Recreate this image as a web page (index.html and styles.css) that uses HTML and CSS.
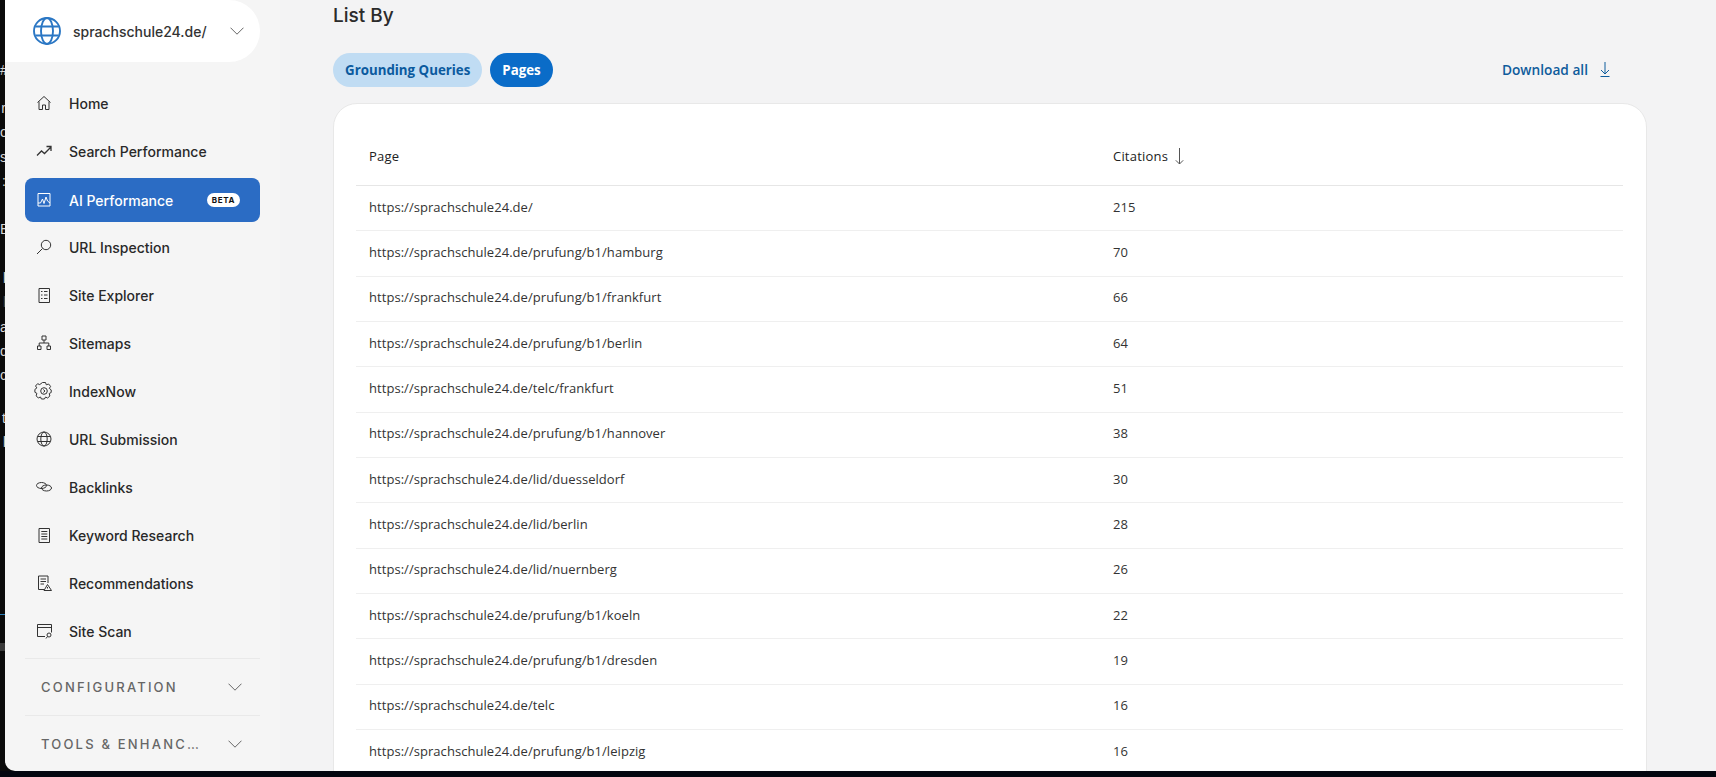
FILE: index.html
```html
<!DOCTYPE html>
<html lang="en">
<head>
<meta charset="utf-8">
<title>AI Performance</title>
<link rel="stylesheet" href="styles.css">
</head>
<body>
<div class="screen">
  <div class="strip" aria-hidden="true">
    <div class="strip-line strip-first">#</div>
    <div class="strip-line">r</div>
    <div class="strip-line">o</div>
    <div class="strip-line">s</div>
    <div class="strip-line">:</div>
    <div class="strip-line"></div>
    <div class="strip-line">B</div>
    <div class="strip-line"></div>
    <div class="strip-line">l</div>
    <div class="strip-line dim">l</div>
    <div class="strip-line">a</div>
    <div class="strip-line">d</div>
    <div class="strip-line">c</div>
    <div class="strip-line"></div>
    <div class="strip-line strip-t">t</div>
    <div class="strip-line">l</div>
    <div class="strip-blue"></div>
    <div class="strip-box"></div>
  </div>

  <aside class="sidebar">
    <div class="site">
      <svg class="globe" viewBox="0 0 28 28" fill="none" stroke="currentColor" stroke-width="1.9">
        <circle cx="14" cy="14" r="13"/>
        <ellipse cx="14" cy="14" rx="6" ry="13"/>
        <path d="M2.5 9.5h23M2.5 18.5h23"/>
      </svg>
      <span class="site-name">sprachschule24.de/</span>
      <svg class="chev site-chev" viewBox="0 0 14 8" fill="none" stroke="currentColor"><path d="M.5.7 7 7.200 13.500.7"/></svg>
    </div>

    <nav class="nav">
      <a class="item">
        <svg class="ico" viewBox="0 0 20 20" fill="none" stroke="currentColor"><path d="M3.500 9.500 10 3.500l6.500 6M5 8.500v8h3.500v-4.500h3v4.500H15v-8"/></svg>
        <span>Home</span>
      </a>
      <a class="item">
        <svg class="ico ico-strong" viewBox="0 0 20 20" fill="none" stroke="currentColor"><path d="M3 14.500 7.500 10l3 2.500L17 6M12.500 5.500H17V10"/></svg>
        <span>Search Performance</span>
      </a>
      <a class="item active">
        <svg class="ico" viewBox="0 0 20 20" fill="none" stroke="currentColor"><path d="M4 3.500h12v12.500H4zM4 13h2.500l2-4 1.500 4.500 2-6.500 1.500 4 2.500 2"/></svg>
        <span>AI Performance</span>
        <span class="beta">BETA</span>
      </a>
      <a class="item">
        <svg class="ico" viewBox="0 0 20 20" fill="none" stroke="currentColor"><circle cx="12" cy="8" r="4.700"/><path d="M8.500 11.500 3 17"/></svg>
        <span>URL Inspection</span>
      </a>
      <a class="item">
        <svg class="ico" viewBox="0 0 20 20" fill="none" stroke="currentColor"><path d="M5 3.500h10.500v14H5zM7 6.500h1.500M10 6.500h3.500M7 10h1.500M10 10h3.500M7 13.500h1.500M10 13.500h3.500"/></svg>
        <span>Site Explorer</span>
      </a>
      <a class="item">
        <svg class="ico" viewBox="0 0 20 20" fill="none" stroke="currentColor"><path d="M8 3h4v4H8zM3.500 13h3.500v3.500H3.500zM13 13h3.500v3.500H13zM10 7v3M5.200 13v-3h9.600v3"/></svg>
        <span>Sitemaps</span>
      </a>
      <a class="item">
        <svg class="ico" viewBox="0 0 20 20" fill="none" stroke="currentColor"><path d="M8.500 1.500h3l.8 2.300 2.300-.8 2 2.400-1.300 2 1.900 1.500v2.600l-2 1 .7 2.500-2.300 2-2-1-1.200 2h-3l-.9-2-2.200.9-2.200-2 .8-2.500-2-1.100V8.400l2-1.500L1.500 5l2.100-2.300 2.100.9z"/><circle cx="10" cy="10" r="3.300"/><path d="M9.300 8.500 11 10l-1.700 1.500"/></svg>
        <span>IndexNow</span>
      </a>
      <a class="item">
        <svg class="ico" viewBox="0 0 20 20" fill="none" stroke="currentColor"><circle cx="10" cy="10" r="7"/><ellipse cx="10" cy="10" rx="3.200" ry="7"/><path d="M3.600 7.500h12.800M3.600 12.500h12.800"/></svg>
        <span>URL Submission</span>
      </a>
      <a class="item">
        <svg class="ico" viewBox="0 0 20 20" fill="none" stroke="currentColor"><ellipse cx="7.500" cy="8.500" rx="5" ry="3"/><ellipse cx="12.500" cy="11" rx="5" ry="3"/></svg>
        <span>Backlinks</span>
      </a>
      <a class="item">
        <svg class="ico" viewBox="0 0 20 20" fill="none" stroke="currentColor"><path d="M5 3.500h10.500v14H5zM7.300 6.500h6M7.300 9h6M7.300 11.500h6M7.300 14h6"/></svg>
        <span>Keyword Research</span>
      </a>
      <a class="item">
        <svg class="ico" viewBox="0 0 20 20" fill="none" stroke="currentColor"><path d="M10 16.500H4.500V3h9.500v7M6.500 6h5.500M6.500 8.500h5.500M6.500 11h3.500M13.500 11.500 10 17.500h7.500zM13.500 14v1.500"/></svg>
        <span>Recommendations</span>
      </a>
      <a class="item">
        <svg class="ico" viewBox="0 0 20 20" fill="none" stroke="currentColor"><path d="M11 15.500H3.500V3.500h14v8M3.500 6.500h14"/><circle cx="15" cy="14" r="2"/><path d="M13.500 15.500 12 17.500"/></svg>
        <span>Site Scan</span>
      </a>
    </nav>

    <div class="section">
      <span class="section-name">CONFIGURATION</span>
      <svg class="chev" viewBox="0 0 14 8" fill="none" stroke="currentColor"><path d="M.5.700 7 7.200 13.500.700"/></svg>
    </div>
    <div class="section">
      <span class="section-name">TOOLS &amp; ENHANC…</span>
      <svg class="chev" viewBox="0 0 14 8" fill="none" stroke="currentColor"><path d="M.5.700 7 7.200 13.500.700"/></svg>
    </div>
  </aside>

  <main class="main">
    <h2 class="title">List By</h2>
    <div class="toolbar">
      <button class="pill">Grounding Queries</button>
      <button class="pill pill-on">Pages</button>
      <a class="download">Download all
        <svg class="dl-ico" viewBox="0 0 10 15" fill="none" stroke="currentColor"><path d="M5 0v11.500M1 8l4 4 4-4M.5 14.500h9"/></svg>
      </a>
    </div>

    <section class="card">
      <table class="table">
        <thead>
          <tr>
            <th class="col-page">Page</th>
            <th>Citations
              <svg class="sort" viewBox="0 0 9 17" fill="none" stroke="currentColor"><path d="M4.500 0v16M.8 12.300l3.700 3.700 3.700-3.700"/></svg>
            </th>
          </tr>
        </thead>
        <tbody>
          <tr><td>https://sprachschule24.de/</td><td>215</td></tr>
          <tr><td>https://sprachschule24.de/prufung/b1/hamburg</td><td>70</td></tr>
          <tr><td>https://sprachschule24.de/prufung/b1/frankfurt</td><td>66</td></tr>
          <tr><td>https://sprachschule24.de/prufung/b1/berlin</td><td>64</td></tr>
          <tr><td>https://sprachschule24.de/telc/frankfurt</td><td>51</td></tr>
          <tr><td>https://sprachschule24.de/prufung/b1/hannover</td><td>38</td></tr>
          <tr><td>https://sprachschule24.de/lid/duesseldorf</td><td>30</td></tr>
          <tr><td>https://sprachschule24.de/lid/berlin</td><td>28</td></tr>
          <tr><td>https://sprachschule24.de/lid/nuernberg</td><td>26</td></tr>
          <tr><td>https://sprachschule24.de/prufung/b1/koeln</td><td>22</td></tr>
          <tr><td>https://sprachschule24.de/prufung/b1/dresden</td><td>19</td></tr>
          <tr><td>https://sprachschule24.de/telc</td><td>16</td></tr>
          <tr><td>https://sprachschule24.de/prufung/b1/leipzig</td><td>16</td></tr>
        </tbody>
      </table>
    </section>
  </main>
</div>
<div class="bottom-bar"></div>
</body>
</html>
```

FILE: styles.css
```css
* { box-sizing: border-box; }
html, body { margin: 0; height: 777px; overflow: hidden; background: #03060f; }
.screen { display: flex; height: 771px; overflow: hidden; background: #0a0a0a; }
.bottom-bar { height: 6px; background: #03060f; }

/* cut-off window behind the app */
.strip { width: 5px; flex: none; overflow: hidden; padding-top: 58px; background: #0b0b0b; font: 14px/24.3px "Liberation Sans", sans-serif; color: #d8d8d8; }
.strip-line { height: 24.3px; text-align: right; margin-right: -1px; }
.strip-first { height: 38px; }
.strip-t { margin-top: -6px; }
.dim { color: #555; }
.strip-blue { height: 1px; margin-top: 160px; background: #2a7fb8; }
.strip-box { height: 8px; margin-top: 28px; background: #3a3a3a; }

/* sidebar */
.sidebar { width: 275px; flex: none; padding-right: 20px; background: #f5f5f5; border-bottom-left-radius: 10px; overflow: hidden; font-family: Inter, "Liberation Sans", sans-serif; }
.site { display: flex; align-items: center; height: 62px; padding-left: 28px; background: #fff; border-radius: 0 32px 32px 0; }
.globe { width: 28px; height: 28px; flex: none; color: #2b77c4; }
.site-name { margin-left: 12px; font-size: 14px; font-weight: 500; color: #333; white-space: nowrap; }
.site-chev { margin-left: 23px; }
.chev { width: 14px; height: 8px; flex: none; color: #666; }

.nav { display: flex; flex-direction: column; gap: 4px; padding: 19px 0 5px 20px; }
.item { display: flex; align-items: center; height: 44px; padding-left: 9px; border-radius: 8px; font-size: 14px; font-weight: 500; color: #292929; white-space: nowrap; }
.ico { width: 20px; height: 20px; flex: none; margin-right: 15px; color: #333; stroke-width: 1; }
.ico-strong { stroke-width: 1.3; }
.active { margin-top: 1px; margin-bottom: -1px; background: #2b6cc4; color: #fff; }
.active .ico { color: #fff; }
.beta { margin-left: auto; margin-right: 20px; height: 14px; padding: 0 5px; border-radius: 7px; background: #fff; color: #111; font-size: 8px; line-height: 14px; font-weight: 700; letter-spacing: .6px; }

.section { display: flex; align-items: center; justify-content: space-between; height: 57px; margin-left: 20px; padding: 0 18px 0 16px; border-top: 1px solid #e9e9e9; }
.section-name { font-size: 13px; font-weight: 500; letter-spacing: 2.2px; color: #666; white-space: nowrap; }

/* main */
.main { flex: 1; min-width: 0; padding: 0 69px 0 53px; background: #f3f3f4; overflow: hidden; font-family: "Open Sans", "Liberation Sans", sans-serif; }
.title { margin: 4px 0 0; font: 500 19px/24px Inter, "Liberation Sans", sans-serif; color: #2b2b2b; }
.toolbar { display: flex; align-items: center; gap: 8px; margin-top: 25px; height: 34px; }
.pill { height: 34px; padding: 0 12px; border: 0; border-radius: 17px; background: #c0dcf3; color: #0b5a9e; font: 700 13.3px "Open Sans", sans-serif; }
.pill-on { background: #0a6cc8; color: #fff; }
.download { display: flex; align-items: center; gap: 12px; margin-left: auto; margin-right: 37px; margin-top: -2px; font-size: 13.7px; font-weight: 600; color: #0f5c9c; white-space: nowrap; }
.dl-ico { width: 10px; height: 15px; }

.card { height: 700px; margin-top: 16px; padding: 24px 22px 0; background: #fff; border: 1px solid #e8e8e8; border-radius: 24px; }
.table { width: 1267px; table-layout: fixed; border-collapse: collapse; font-size: 13px; letter-spacing: .05px; color: #333; }
.col-page { width: 744px; }
th { height: 57.5px; padding: 0 13px 1px; font-weight: 500; letter-spacing: .2px; text-align: left; color: #222; border-bottom: 1px solid #e6e6e6; }
td { height: 45.33px; padding: 0 13px 3px; border-bottom: 1px solid #efefef; white-space: nowrap; }
.sort { width: 9px; height: 17px; margin-left: 3px; vertical-align: -4px; color: #555; }
```
